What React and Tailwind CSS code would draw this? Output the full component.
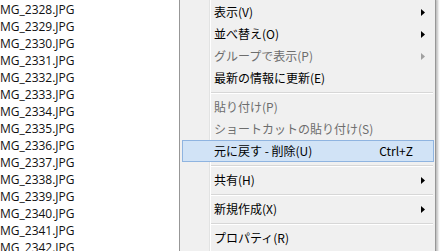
const FILES = Array.from({ length: 15 }, (_, i) => `MG_${2328 + i}.JPG`)

const MENU = [
  { label: '表示(V)', sub: true },
  { label: '並べ替え(O)', sub: true },
  { label: 'グループで表示(P)', sub: true, disabled: true },
  { label: '最新の情報に更新(E)' },
  { sep: true },
  { label: '貼り付け(P)', disabled: true },
  { label: 'ショートカットの貼り付け(S)', disabled: true },
  { label: '元に戻す - 削除(U)', shortcut: 'Ctrl+Z', hot: true },
  { sep: true },
  { label: '共有(H)', sub: true },
  { sep: true },
  { label: '新規作成(X)', sub: true },
  { sep: true },
  { label: 'プロパティ(R)' },
]

function Arrow({ disabled }) {
  return (
    <svg width="4" height="7" viewBox="0 0 4 7">
      <path d="M0 0 L4 3.5 L0 7 Z" fill={disabled ? '#a0a0a0' : '#000'} />
    </svg>
  )
}

function MenuRow({ item }) {
  if (item.sep) {
    return (
      <div className="h-[7px] pl-[31px] pr-[2px] pt-[3px]">
        <div className="h-[1px] bg-[#d7d7d7]" />
        <div className="h-[1px] bg-white" />
      </div>
    )
  }
  return (
    <div
      className={
        'relative h-[22px] flex items-center ' +
        (item.hot ? 'ml-[2px] mr-[1px] border border-[#8fb4e0] bg-[#d1e3f6] pl-[31px]' : 'pl-[34px]')
      }
    >
      <span className={'flex-1 leading-none ' + (item.disabled ? 'text-[#6d6d6d]' : 'text-black')}>
        {item.label}
      </span>
      {item.shortcut && <span className="leading-none text-black pr-[1px]">{item.shortcut}</span>}
      <span className="w-[19px] pl-[5px] flex items-center">
        {item.sub && <Arrow disabled={item.disabled} />}
      </span>
    </div>
  )
}

export default function App() {
  return (
    <div className="relative w-[443px] h-[251px] bg-white overflow-hidden">
      {/* file list */}
      <div className="pt-[1px] text-[12px] text-[#111]" style={{ fontFamily: '"Open Sans", "Noto Sans", sans-serif' }}>
        {FILES.map(f => (
          <div key={f} className="h-[17px] flex items-center leading-none">{f}</div>
        ))}
      </div>

      {/* context menu */}
      <div
        className="absolute left-[179px] top-[-3px] w-[257px] border border-[#979797] bg-[#f0f0f0] pt-[3px] pb-[3px] text-[12px] shadow-[2px_2px_2px_rgba(0,0,0,0.25)]"
        style={{ fontFamily: '"Noto Sans CJK JP", "Noto Sans", sans-serif' }}
      >
        <div className="absolute left-[29px] top-0 bottom-0 w-[1px] bg-[#e2e3e3]" />
        <div className="absolute left-[30px] top-0 bottom-0 w-[1px] bg-white" />
        {MENU.map((item, i) => <MenuRow key={i} item={item} />)}
      </div>
    </div>
  )
}
